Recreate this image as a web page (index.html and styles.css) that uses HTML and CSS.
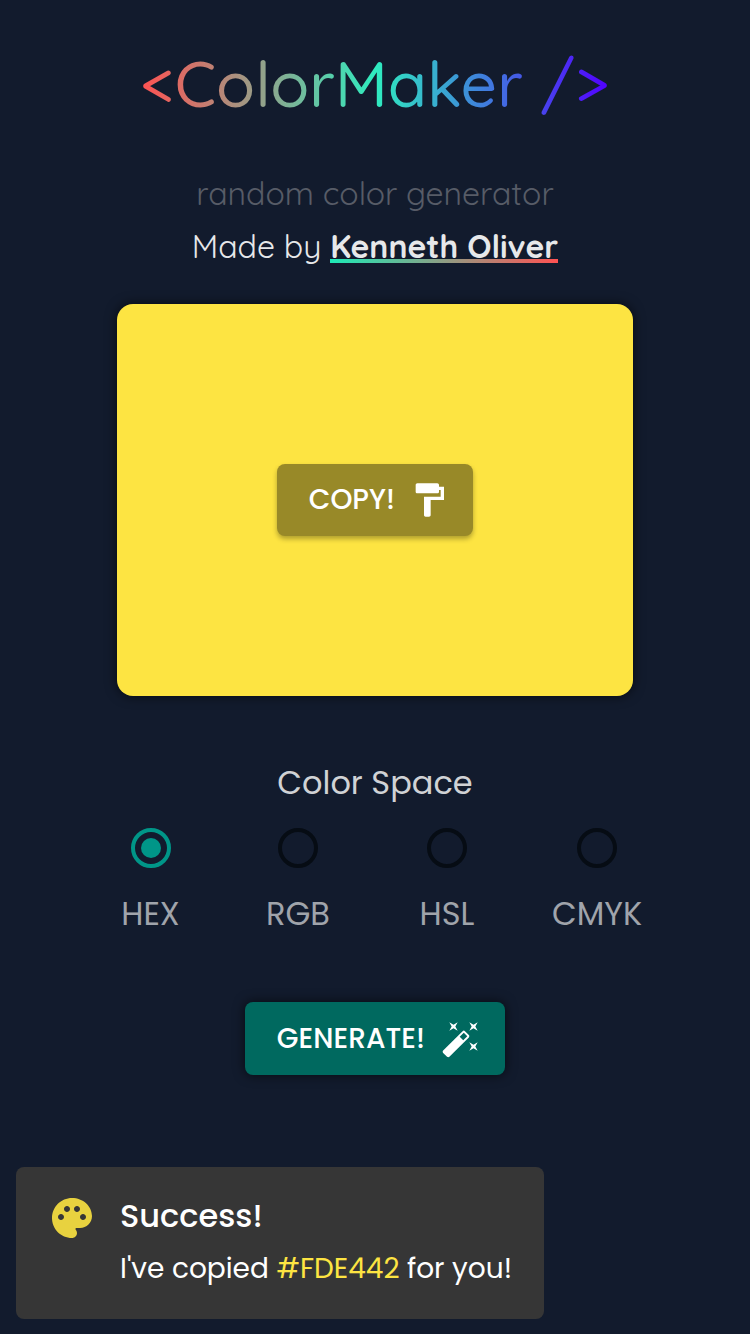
FILE: index.html
```html
<!DOCTYPE html>
<html lang="en">
<head>
<meta charset="utf-8">
<title>ColorMaker</title>
<link rel="stylesheet" href="styles.css">
</head>
<body>
<main class="app">
  <h1 class="title">&lt;ColorMaker /&gt;</h1>
  <p class="tagline">random color generator</p>
  <p class="credit">Made by <a class="author">Kenneth Oliver</a></p>
  <section class="swatch">
    <button class="btn copy"><span class="label">COPY!</span>
      <svg class="icon" viewBox="0 0 24 24"><path d="M18 4V3c0-.55-.45-1-1-1H5c-.55 0-1 .45-1 1v4c0 .55.45 1 1 1h12c.55 0 1-.45 1-1V6h1v4H9v11c0 .55.45 1 1 1h2c.55 0 1-.45 1-1v-9h8V4h-3z"/></svg>
    </button>
  </section>
  <h2 class="space-title">Color Space</h2>
  <div class="spaces">
    <label class="space"><svg class="radio checked" viewBox="0 0 24 24"><circle class="ring" cx="12" cy="12" r="9"/><circle class="dot" cx="12" cy="12" r="5"/></svg><span>HEX</span></label>
    <label class="space"><svg class="radio" viewBox="0 0 24 24"><circle class="ring" cx="12" cy="12" r="9"/></svg><span>RGB</span></label>
    <label class="space"><svg class="radio" viewBox="0 0 24 24"><circle class="ring" cx="12" cy="12" r="9"/></svg><span>HSL</span></label>
    <label class="space"><svg class="radio" viewBox="0 0 24 24"><circle class="ring" cx="12" cy="12" r="9"/></svg><span>CMYK</span></label>
  </div>
  <button class="btn generate"><span class="label">GENERATE!</span>
    <svg class="icon" viewBox="0 0 24 24"><path d="M7.5 5.6L10 7 8.6 4.5 10 2 7.5 3.4 5 2l1.4 2.5L5 7zm12 9.8L17 14l1.4 2.5L17 19l2.5-1.4L22 19l-1.4-2.5L22 14zM22 2l-2.5 1.4L17 2l1.4 2.5L17 7l2.5-1.4L22 7l-1.4-2.5zm-7.63 5.29a.9959.9959 0 00-1.41 0L1.29 18.96c-.39.39-.39 1.02 0 1.41l2.34 2.34c.39.39 1.02.39 1.41 0L16.7 11.05c.39-.39.39-1.02 0-1.41l-2.33-2.35zm-1.03 5.49l-2.12-2.12 2.44-2.44 2.12 2.12-2.44 2.44z"/></svg>
  </button>
  <aside class="toast">
    <svg class="palette" viewBox="0 0 24 24"><path d="M12 2C6.49 2 2 6.49 2 12s4.49 10 10 10c1.38 0 2.5-1.12 2.5-2.5 0-.61-.23-1.2-.64-1.67-.08-.1-.13-.21-.13-.33 0-.28.22-.5.5-.5H16c3.31 0 6-2.69 6-6 0-4.96-4.49-9-10-9zm5.5 11c-.83 0-1.5-.67-1.5-1.5s.67-1.5 1.5-1.5 1.5.67 1.5 1.5-.67 1.5-1.5 1.5zm-3-4c-.83 0-1.5-.67-1.5-1.5S13.67 6 14.5 6s1.5.67 1.5 1.5S15.33 9 14.5 9zM5 11.5c0-.83.67-1.5 1.5-1.5s1.5.67 1.5 1.5S7.33 13 6.5 13 5 12.33 5 11.5zm6-4c0 .83-.67 1.5-1.5 1.5S8 8.33 8 7.5 8.67 6 9.5 6s1.5.67 1.5 1.5z"/></svg>
    <div class="message">
      <strong class="status">Success!</strong>
      <p class="detail">I've copied <span class="code">#FDE442</span> for you!</p>
    </div>
  </aside>
</main>
</body>
</html>
```
FILE: styles.css
```css
* { box-sizing: border-box; margin: 0; padding: 0; }
body { background: #121b2d; font-family: Poppins, Inter, sans-serif; color: #fff; }
.app { width: 750px; height: 1334px; padding-top: 41px; display: flex; flex-direction: column; align-items: center; overflow: hidden; }
.title, .tagline, .credit { font-family: Quicksand, Lato, sans-serif; white-space: nowrap; }
.title { height: 84px; font-size: 64px; line-height: 84px; font-weight: 500; color: transparent; background: linear-gradient(to right, #ff5252, #2fecbf 50%, #5200ff); -webkit-background-clip: text; background-clip: text; }
.tagline { margin-top: 44px; height: 48px; line-height: 48px; font-size: 32px; color: #575c67; }
.credit { height: 52px; margin-top: 5px; line-height: 48px; font-size: 32px; color: #e7e8ea; }
.author { display: inline-block; height: 41px; font-weight: 700; vertical-align: top; background: linear-gradient(to right, #1de9b6, #ff5252) 0 100% / 100% 4px no-repeat; }
.swatch { width: 516.6px; height: 392px; margin-top: 30px; border-radius: 16px; background: #fde442; display: flex; justify-content: center; align-items: center; box-shadow: 0 0 12px rgba(0,0,0,.65); flex: none; }
.btn { display: flex; align-items: center; border: 0; border-radius: 8px; color: #fff; font-family: inherit; font-size: 28px; font-weight: 500; line-height: 44px; text-align: left; white-space: nowrap; flex: none; }
.icon { width: 40px; height: 40px; fill: #fff; flex: none; }
.copy { width: 196.5px; height: 72px; padding-left: 32px; background: #988928; box-shadow: 0 3px 5px rgba(0,0,0,.3); }
.copy .label { width: 100.5px; }
.generate { width: 260.5px; height: 73px; margin-top: 61px; padding-left: 32px; background: #00695f; box-shadow: 0 0 12px rgba(0,0,0,.65); }
.generate .label { width: 164.5px; letter-spacing: .06px; }
.space-title { margin-top: 63px; height: 48px; line-height: 48px; font-size: 32px; font-weight: 400; color: #d0d2d5; }
.spaces { display: grid; grid-template-columns: 147px 148px 150px 150px; width: 596px; height: 134px; padding-top: 17px; }
.space { display: flex; flex-direction: column; align-items: center; font-size: 32px; line-height: 48px; color: #a0a4ab; }
.space span { margin-top: 18px; }
.radio { width: 48px; height: 48px; flex: none; }
.ring { fill: none; stroke: #060c14; stroke-width: 2; }
.checked .ring { stroke: #009688; }
.dot { fill: #009688; }
.toast { align-self: flex-start; display: flex; width: 528px; height: 152px; margin: 91.5px 0 0 16px; padding: 26px 0 0 32px; border-radius: 8px; background: #363636; flex: none; }
.palette { width: 48px; height: 48px; margin-top: 1px; fill: #e8d23f; flex: none; }
.message { margin-left: 24px; white-space: nowrap; }
.status { display: block; font-size: 32px; font-weight: 500; line-height: 46px; }
.detail { margin-top: 8.5px; font-size: 28px; line-height: 44px; }
.code { color: #fde442; }
```
